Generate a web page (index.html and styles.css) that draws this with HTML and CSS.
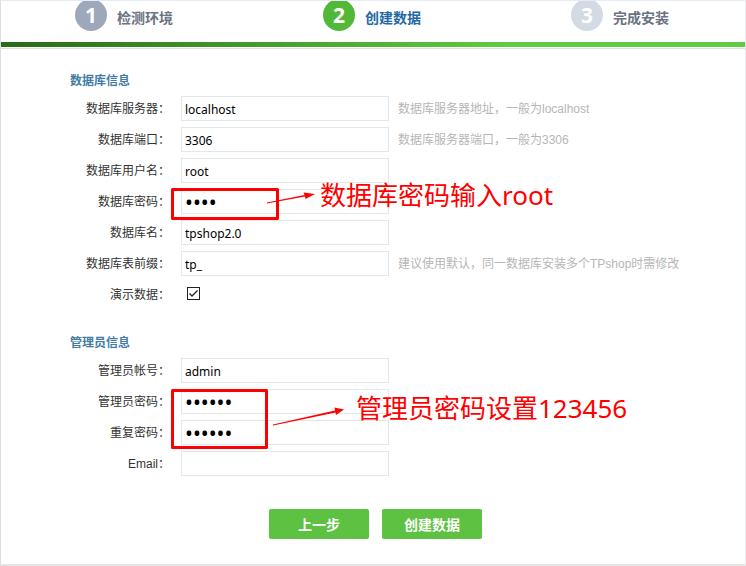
FILE: index.html
```html
<!DOCTYPE html>
<html lang="zh-CN">
<head>
<meta charset="utf-8">
<title>创建数据</title>
<link rel="stylesheet" href="styles.css">
</head>
<body>
<main class="page">
  <ol class="steps">
    <li class="step step-done"><span class="num">1</span><span class="name">检测环境</span></li>
    <li class="step step-current"><span class="num">2</span><span class="name">创建数据</span></li>
    <li class="step step-next"><span class="num">3</span><span class="name">完成安装</span></li>
  </ol>
  <div class="progress"></div>
  <form class="form">
    <section class="group">
      <h2>数据库信息</h2>
      <div class="row"><label for="host">数据库服务器：</label><div class="field"><input id="host" type="text" value="localhost"></div><span class="hint">数据库服务器地址，一般为localhost</span></div>
      <div class="row"><label for="port">数据库端口：</label><div class="field"><input id="port" type="text" value="3306"></div><span class="hint">数据库服务器端口，一般为3306</span></div>
      <div class="row"><label for="user">数据库用户名：</label><div class="field"><input id="user" type="text" value="root"></div></div>
      <div class="row"><label for="dbpw">数据库密码：</label><div class="field"><input id="dbpw" type="password" value="root">
        <svg class="mark mark-db" width="150" height="38" viewBox="0 0 150 38"><rect x="3.5" y="3.5" width="105" height="29" fill="none" stroke="#f00" stroke-width="3" stroke-linejoin="round"/><path d="M98 16.500L135.500 9L134.500 6.500L146 8L136.500 13L136 10.500L98 17.500Z" fill="#f00"/></svg>
        <span class="note note-db">数据库密码输入root</span></div></div>
      <div class="row"><label for="dbname">数据库名：</label><div class="field"><input id="dbname" type="text" value="tpshop2.0"></div></div>
      <div class="row"><label for="prefix">数据库表前缀：</label><div class="field"><input id="prefix" type="text" value="tp_"></div><span class="hint">建议使用默认，同一数据库安装多个TPshop时需修改</span></div>
      <div class="row"><label for="demo">演示数据：</label><div class="field"><input id="demo" class="check" type="checkbox" checked><svg class="tick" width="11" height="11" viewBox="0 0 11 11"><path d="M1.500 5.500L4 8L9.500 2.500" fill="none" stroke="#222" stroke-width="1.300"/></svg></div></div>
    </section>
    <section class="group">
      <h2>管理员信息</h2>
      <div class="row"><label for="admin">管理员帐号：</label><div class="field"><input id="admin" type="text" value="admin"></div></div>
      <div class="row"><label for="pw">管理员密码：</label><div class="field"><input id="pw" type="password" value="123456">
        <svg class="mark mark-admin" width="180" height="66" viewBox="0 0 180 66"><rect x="3.500" y="3.500" width="94" height="57" fill="none" stroke="#f00" stroke-width="3" stroke-linejoin="round"/><path d="M104 37.500L166 23.500L165.500 20.500L175 22.500L167 28L166.500 25.500L104 38.500Z" fill="#f00"/></svg>
        <span class="note note-admin">管理员密码设置123456</span></div></div>
      <div class="row"><label for="pw2">重复密码：</label><div class="field"><input id="pw2" type="password" value="123456"></div></div>
      <div class="row"><label for="email">Email：</label><div class="field"><input id="email" type="text"></div></div>
    </section>
    <div class="actions">
      <button type="button">上一步</button>
      <button type="button">创建数据</button>
    </div>
  </form>
</main>
</body>
</html>
```
FILE: styles.css
```css
* { box-sizing: border-box; }
body {
  margin: 0;
  background: #fff;
  color: #333;
  font: 12px/27px "Liberation Sans", "Noto Sans CJK SC", sans-serif;
}
.page {
  border: 1px solid #e6ecf6;
  border-left-color: #ddd;
  border-bottom: 2px solid #e4e4e4;
}

/* Steps */
.steps {
  display: grid;
  grid-template-columns: repeat(3, 1fr);
  height: 41px;
  margin: 0;
  padding: 0;
  list-style: none;
  overflow: hidden;
}
.step {
  display: flex;
  align-items: flex-start;
  gap: 10px;
  padding-left: 74px;
  color: #6b7280;
  font-size: 14px;
  font-weight: bold;
}
.num {
  width: 32px;
  height: 32px;
  margin-top: -2px;
  padding-top: 2px;
  border-radius: 50%;
  color: #fff;
  font: bold 21px/28px "Noto Sans", sans-serif;
  text-align: center;
}
.name { line-height: 34px; }
.step-done .num { background: #9da9bb; }
.step-current .num { background: #52b837; }
.step-current .name { color: #2368a2; }
.step-next .num { background: #d4dae4; }
.progress {
  height: 7px;
  border-bottom: 1px solid #dde1e6;
  background: linear-gradient(90deg, #286a18, #5ecb40 67%) top / 100% 5px no-repeat;
}

/* Form */
.form { padding: 19px 0 25px 69px; }
.group {
  display: grid;
  gap: 6px;
  margin-bottom: 23px;
}
h2 {
  height: 24px;
  margin: 0 0 -2px;
  color: #417ca6;
  font-size: 12px;
  line-height: 26px;
}
.row {
  display: flex;
  height: 25px;
}
.row label {
  width: 100px;
  margin-right: 11px;
  text-align: right;
  white-space: nowrap;
}
.field {
  position: relative;
  width: 208px;
  height: 25px;
}
.field input {
  display: block;
  width: 100%;
  height: 25px;
  margin: 0;
  padding: 2px 3px 0;
  border: 1px solid #e2e7ee;
  background: #fff;
  color: #000;
  font: 12px "Noto Sans", sans-serif;
}
.field input[type="password"] {
  padding-top: 0;
  font-size: 21px;
}
.field .check {
  appearance: none;
  width: 13px;
  height: 13px;
  margin: 5px 0 0 6px;
  padding: 0;
  border-color: #222;
}
.tick {
  position: absolute;
  top: 6px;
  left: 7px;
  pointer-events: none;
}
.hint {
  margin-left: 9px;
  color: #b6b6b6;
  white-space: nowrap;
}

/* Annotations over the fields */
.mark, .note {
  position: absolute;
  z-index: 1;
  pointer-events: none;
}
.mark { left: -12px; }
.mark-db { top: -3px; }
.mark-admin { top: -2px; }
.note {
  color: #f00;
  font: 26px/36px "Noto Sans", "Noto Sans CJK SC", sans-serif;
  white-space: nowrap;
}
.note-db { top: -12px; left: 139px; }
.note-admin { top: 1px; left: 175px; }

/* Buttons */
.actions {
  display: flex;
  justify-content: center;
  gap: 13px;
  margin: 33px 64px 0 0;
}
button {
  width: 100px;
  height: 30px;
  padding: 0;
  border: 0;
  border-radius: 2px;
  background: #5dc141;
  color: #fff;
  font: bold 14px "Liberation Sans", "Noto Sans CJK SC", sans-serif;
}
```
